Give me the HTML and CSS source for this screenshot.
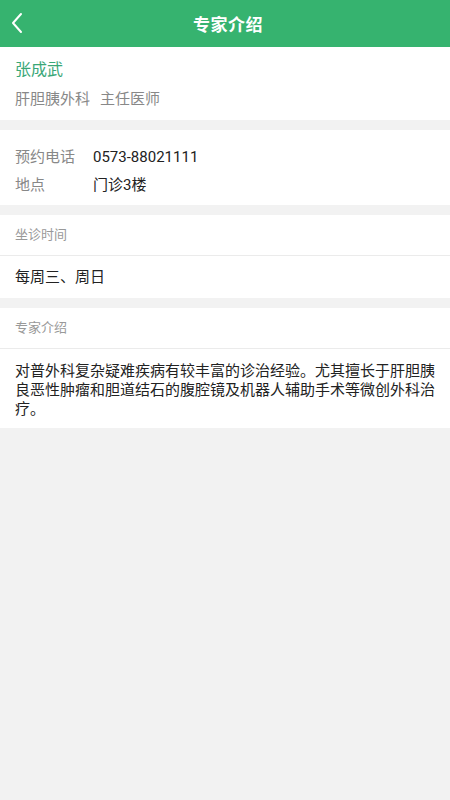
FILE: index.html
```html
<!DOCTYPE html>
<html lang="zh-CN">
<head>
  <meta charset="UTF-8" />
  <meta name="viewport" content="width=device-width, initial-scale=1.0"/>
  <title>专家介绍</title>
  <link rel="stylesheet" href="styles.css">
</head>
<body>
  <!-- 顶部导航 -->
  <div class="topbar">
    <a class="back" href="#">
      <svg width="12" height="22" viewBox="0 0 12 22">
        <polyline points="10,2 2,11 10,20" fill="none" stroke="#fff" stroke-width="2" stroke-linecap="round" stroke-linejoin="round"/>
      </svg>
    </a>
    <div class="title">专家介绍</div>
  </div>

  <div class="block doctor">
    <div class="name">张成武</div>
    <div class="dept"><span>肝胆胰外科</span><span>主任医师</span></div>
  </div>

  <div class="block info">
    <div class="row"><span class="label">预约电话</span><span class="value">0573-88021111</span></div>
    <div class="row"><span class="label">地点</span><span class="value">门诊3楼</span></div>
  </div>

  <div class="block">
    <div class="block-head">坐诊时间</div>
    <div class="block-line">每周三、周日</div>
  </div>

  <div class="block">
    <div class="block-head">专家介绍</div>
    <div class="block-text">对普外科复杂疑难疾病有较丰富的诊治经验。尤其擅长于肝胆胰良恶性肿瘤和胆道结石的腹腔镜及机器人辅助手术等微创外科治疗。</div>
  </div>
</body>
</html>
```

FILE: styles.css
```css
body {
  margin: 0;
  padding: 0;
  background-color: #f2f2f2;
  font-family: Roboto, "Noto Sans CJK SC", sans-serif;
  color: #222;
}
.topbar {
  height: 47px;
  background-color: #36b36f;
  display: flex;
  align-items: center;
  justify-content: center;
  position: relative;
}
.topbar .back {
  position: absolute;
  left: 11px;
  top: 12px;
  display: block;
  width: 12px;
  height: 22px;
}
.topbar .back svg {
  display: block;
}
.topbar .title {
  color: #fff;
  font-size: 17px;
  font-weight: bold;
  letter-spacing: 0.5px;
  padding-left: 6px;
}
.block {
  background-color: #fff;
  margin-bottom: 10px;
}
.doctor {
  padding: 11px 15px 9px;
}
.doctor .name {
  color: #3aa777;
  font-size: 16px;
  line-height: 24px;
}
.doctor .dept {
  margin-top: 5px;
  color: #888;
  font-size: 15px;
  line-height: 24px;
  display: flex;
  gap: 10px;
}
.info {
  padding: 13px 15px 6px;
}
.info .row {
  display: flex;
  font-size: 15px;
  line-height: 28px;
}
.info .label {
  width: 78px;
  color: #888;
}
.info .value {
  color: #222;
}
.block-head {
  height: 40px;
  line-height: 40px;
  padding: 0 15px;
  font-size: 13px;
  color: #999;
  border-bottom: 1px solid #ebebeb;
}
.block-line {
  height: 42px;
  line-height: 42px;
  padding: 0 15px;
  font-size: 15px;
}
.block-text {
  padding: 13px 12px 9px 15px;
  font-size: 15px;
  line-height: 19px;
}
```
